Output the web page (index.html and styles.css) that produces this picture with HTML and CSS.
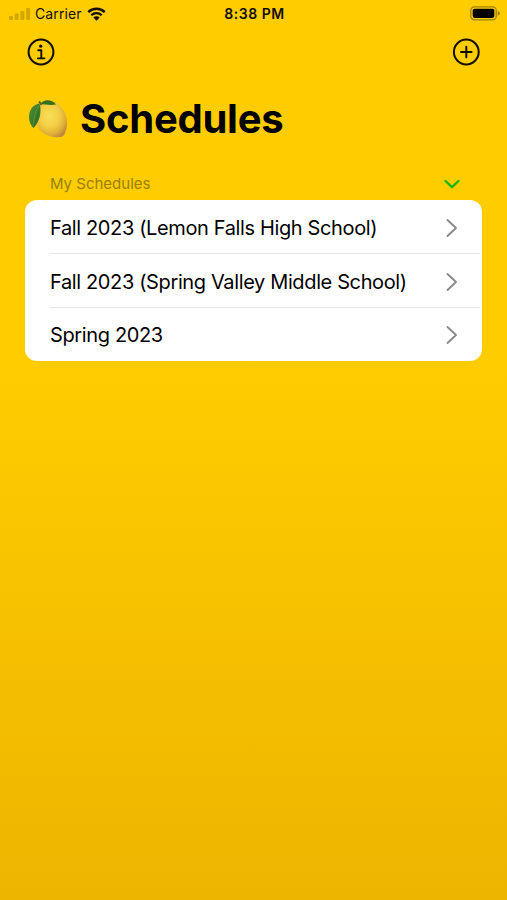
FILE: index.html
```html
<!DOCTYPE html>
<html lang="en">
<head>
  <meta charset="utf-8">
  <meta name="viewport" content="width=device-width, initial-scale=1">
  <title>Schedules</title>
  <link rel="stylesheet" href="styles.css">
</head>
<body>
  <div class="status-bar">
    <div class="status-left">
      <svg class="signal" width="22" height="14" viewBox="0 0 22 14">
        <rect x="0" y="9" width="4" height="4" rx="1"/>
        <rect x="5.7" y="6.5" width="4" height="6.5" rx="1"/>
        <rect x="11.4" y="4" width="4" height="9" rx="1"/>
        <rect x="17.1" y="1" width="4" height="12" rx="1"/>
      </svg>
      <span class="carrier">Carrier</span>
      <svg class="wifi" width="19" height="14" viewBox="0 0 19 14">
        <path d="M1.3 5.1 A11.8 11.8 0 0 1 17.7 5.1" fill="none" stroke="#110e00" stroke-width="2.5"/>
        <path d="M4.3 8.2 A7.4 7.4 0 0 1 14.7 8.2" fill="none" stroke="#110e00" stroke-width="2.3"/>
        <path d="M6.3 10.6 A4.6 4.6 0 0 1 12.7 10.6 L9.5 13.8 Z" fill="#110e00"/>
      </svg>
    </div>
    <span class="time">8:38 PM</span>
    <svg class="battery" width="30" height="15" viewBox="0 0 30 15">
      <rect x="0.8" y="0.8" width="25.4" height="13" rx="3.6" fill="none" stroke="#a18100" stroke-width="1.3"/>
      <rect x="2.7" y="2.7" width="21.6" height="9.2" rx="1.8" fill="#000"/>
      <path d="M27.7 5 Q30 5.7 30 7.3 Q30 8.9 27.7 9.6 Z" fill="#a18100"/>
    </svg>
  </div>

  <nav class="toolbar">
    <a class="icon-button" aria-label="Info">
      <svg width="28" height="28" viewBox="0 0 28 28" fill="none" stroke="#110e00">
        <circle cx="14" cy="14" r="12.4" stroke-width="2"/>
        <circle cx="13.7" cy="8.2" r="1.6" fill="#110e00" stroke="none"/>
        <path d="M11.2 12.2 H14.3 V20.3 M10.8 20.4 H17.4" stroke-width="1.9" stroke-linecap="round" stroke-linejoin="round"/>
      </svg>
    </a>
    <a class="icon-button" aria-label="Add">
      <svg width="28" height="28" viewBox="0 0 28 28" fill="none" stroke="#110e00">
        <circle cx="14.3" cy="14" r="12.4" stroke-width="2"/>
        <path d="M14.3 8.7 V19.3 M9 14 H19.6" stroke-width="2" stroke-linecap="round"/>
      </svg>
    </a>
  </nav>

  <header class="title">
    <svg class="lemon" width="40" height="40" viewBox="0 0 40 40">
      <defs>
        <radialGradient id="peel" cx="0.42" cy="0.4" r="0.66">
          <stop offset="0" stop-color="#fbdf5c"/>
          <stop offset="0.5" stop-color="#f2cd42"/>
          <stop offset="0.8" stop-color="#dfad38"/>
          <stop offset="1" stop-color="#c0893c"/>
        </radialGradient>
        <linearGradient id="leaf" x1="0" y1="0" x2="1" y2="1">
          <stop offset="0" stop-color="#4f9036"/>
          <stop offset="1" stop-color="#2a651e"/>
        </linearGradient>
      </defs>
      <path d="M12 7 C16 2.5 26 1.5 31 6 C36 10 39 17 39 24 C39 28 38.5 30 37.5 32 C37 36 35 38 31 38 C25 39 16 36 12 31 C8 25 8 13 12 7 Z" fill="url(#peel)"/>
      <path d="M13 5 C15 0 24 0 28 5.5 C23 6.5 17 5.5 13 5 Z" fill="#35701f"/>
      <path d="M11.5 4.5 C4 6 1 12 1 18 C1 23 3 26.5 5.5 29 C11.5 23 14 13 11.5 4.5 Z" fill="url(#leaf)"/>
      <path d="M11 6.5 Q6 14 5.2 27" fill="none" stroke="#65a044" stroke-width="0.7"/>
      <path d="M11 2.5 Q12.5 4 13.5 6" fill="none" stroke="#52651c" stroke-width="1.8"/>
    </svg>
    <h1>Schedules</h1>
  </header>

  <main class="section">
    <div class="section-header">
      <h2>My Schedules</h2>
      <svg width="18" height="12" viewBox="0 0 18 12">
        <path d="M2.5 3 L9 9.2 L15.5 3" fill="none" stroke="#19b900" stroke-width="2.4" stroke-linecap="round" stroke-linejoin="round"/>
      </svg>
    </div>
    <ul class="schedules">
      <li>
        <span class="name">Fall 2023 (Lemon Falls High School)</span>
        <svg class="chevron" width="12" height="20" viewBox="0 0 12 20"><path d="M1.5 2 L10 10 L1.5 18"/></svg>
      </li>
      <li>
        <span class="name">Fall 2023 (Spring Valley Middle School)</span>
        <svg class="chevron" width="12" height="20" viewBox="0 0 12 20"><path d="M1.5 2 L10 10 L1.5 18"/></svg>
      </li>
      <li>
        <span class="name">Spring 2023</span>
        <svg class="chevron" width="12" height="20" viewBox="0 0 12 20"><path d="M1.5 2 L10 10 L1.5 18"/></svg>
      </li>
    </ul>
  </main>
</body>
</html>
```

FILE: styles.css
```css
* {
  box-sizing: border-box;
}

body {
  margin: 0;
  min-height: 100vh;
  font-family: Inter, "Liberation Sans", sans-serif;
  color: #000;
  background: linear-gradient(#ffcc00 0%, #ffcc00 40%, #f7c200 67%, #edb500 100%);
}

.status-bar {
  display: grid;
  grid-template-columns: 1fr auto 1fr;
  align-items: center;
  height: 27px;
  padding: 0 7px 0 9px;
  color: #110e00;
}

.status-left {
  display: flex;
  align-items: center;
}

.signal {
  fill: #d2a800;
}

.carrier {
  margin: 0 5px 0 4px;
  font-size: 14px;
  letter-spacing: 0.1px;
}

.time {
  font-size: 14px;
  font-weight: 600;
  letter-spacing: 0.5px;
}

.battery {
  justify-self: end;
}

.toolbar {
  display: flex;
  justify-content: space-between;
  padding: 11px 27px 0;
}

.icon-button {
  display: block;
  height: 28px;
}

.title {
  display: flex;
  align-items: center;
  gap: 12px;
  height: 50px;
  margin-top: 28px;
  padding-left: 28px;
}

.title h1 {
  margin: 0;
  font-size: 40px;
  font-weight: 700;
  line-height: 50px;
  letter-spacing: -0.25px;
}

.section {
  padding: 0 25px;
}

.section-header {
  display: flex;
  align-items: center;
  justify-content: space-between;
  height: 32px;
  margin-top: 24px;
  padding: 0 21px 0 25px;
}

.section-header h2 {
  margin: 0 0 2px;
  font-size: 15px;
  font-weight: 400;
  color: #9a7f0c;
}

.schedules {
  margin: 0;
  padding: 0;
  list-style: none;
  background: #fff;
  border-radius: 12px;
}

.schedules li {
  display: flex;
  align-items: center;
  justify-content: space-between;
  height: 54px;
  margin-left: 25px;
  margin-right: 2px;
  padding-top: 2px;
  padding-right: 22px;
  border-bottom: 1px solid #e6e6e8;
}

.schedules li:last-child {
  height: 53px;
  padding-top: 1px;
  border-bottom: 0;
}

.name {
  font-size: 20px;
  letter-spacing: -0.37px;
}

.chevron path {
  fill: none;
  stroke: #8a8a8d;
  stroke-width: 1.9;
  stroke-linecap: round;
  stroke-linejoin: round;
}
```
